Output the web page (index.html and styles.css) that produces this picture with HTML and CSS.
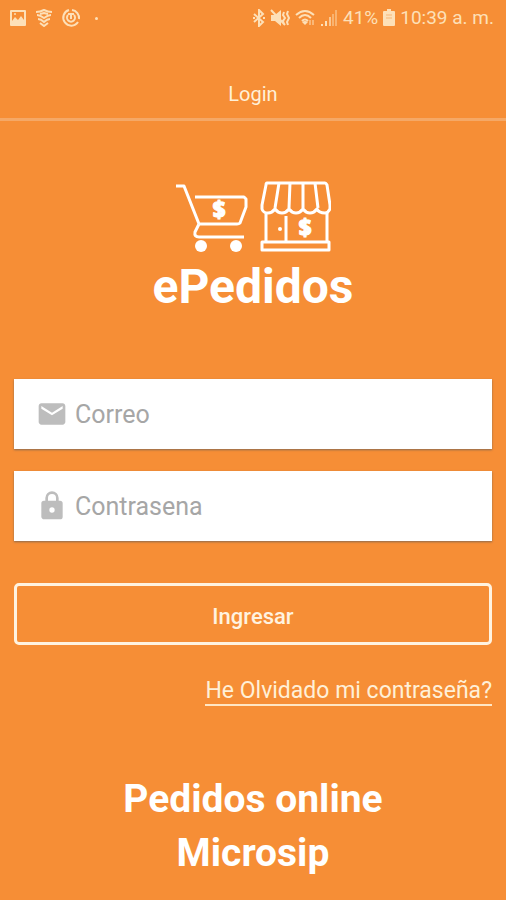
FILE: index.html
```html
<!DOCTYPE html>
<html lang="es">
<head>
<meta charset="utf-8">
<meta name="viewport" content="width=device-width, initial-scale=1">
<title>ePedidos</title>
<link rel="stylesheet" href="styles.css">
</head>
<body>
<div class="status">
  <div class="status-group status-left">
    <svg width="18" height="18" viewBox="0 0 18 18"><path fill="currentColor" fill-rule="evenodd" d="M2 1h14a1 1 0 0 1 1 1v14a1 1 0 0 1-1 1H2a1 1 0 0 1-1-1V2a1 1 0 0 1 1-1zm1 2v9l3-4 3 3 3-4 3 4V3z"/><circle cx="6" cy="5" r="1" fill="currentColor"/></svg>
    <svg width="18" height="18" viewBox="0 0 18 18" fill="none" stroke="currentColor" stroke-width="2"><path d="M1 3q4 0 8-2 4 2 8 2M2 6q3 0 7 3 4-3 7-3M3 10q3 0 6 3 3-3 6-3M5 14l4 3 4-3M5 5l4-1 4 1"/></svg>
    <svg width="20" height="20" viewBox="0 0 20 20" fill="none" stroke="currentColor" stroke-width="2"><path d="M11 2a8 8 0 0 1 7 9M17 14A8 8 0 1 1 8 2"/><path d="M7 7a4 4 0 1 0 6 0M7 6h6M10 5v6"/></svg>
    <span class="dot"></span>
  </div>
  <div class="status-group status-right">
    <svg width="12" height="18" viewBox="0 0 12 18" fill="none" stroke="currentColor" stroke-width="2"><path d="M1 5l9 8-4 4V1l4 4-9 8"/><path d="M0 9h2M10 9h2"/></svg>
    <svg width="20" height="18" viewBox="0 0 20 18"><path fill="currentColor" d="M1 6h4l6-5v16l-6-5H1z"/><path fill="none" stroke="currentColor" stroke-width="2" d="M1 1l14 15M14 3l-1 3 2 3-2 3 1 3M18 2l-1 3 2 4-2 4 1 3"/></svg>
    <svg width="20" height="18" viewBox="0 0 20 18" fill="none" stroke="currentColor" stroke-width="2"><path d="M1 6q9-8 18 0M4 9q6-6 12 0M7 12q3-3 6 0"/><path fill="currentColor" stroke="none" d="M7 13l3 3 3-3q-3-2-6 0z"/><path opacity=".5" d="M15 11v5M18 11v5"/></svg>
    <svg width="18" height="18" viewBox="0 0 18 18" fill="none" stroke="currentColor" stroke-width="2"><path d="M2 15v2M6 12v5"/><path opacity=".7" d="M10 8v9"/><path opacity=".45" d="M16 1v16M13 5v12"/></svg>
    <span>41%</span>
    <svg width="12" height="18" viewBox="0 0 12 18"><path fill="currentColor" d="M4 0h4v2h3a1 1 0 0 1 1 1v13a1 1 0 0 1-1 1H1a1 1 0 0 1-1-1V3a1 1 0 0 1 1-1h3z"/><path fill="none" stroke="#f68e36" opacity=".5" d="M3 6h6M3 9h6"/></svg>
    <span>10:39 a. m.</span>
  </div>
</div>
<header class="bar">Login</header>
<main class="content">
  <div class="brand">
    <svg class="logo" width="156" height="74" viewBox="175 180 156 74" fill="none" stroke="#fff" stroke-width="3" stroke-linejoin="round" aria-hidden="true">
      <path d="M176 186h8l15 38M195 197h49l2 2v8l-6 16q-1 1-3 1h-38M199 224l-4 8q-1 5 4 5h45"/>
      <g fill="#fff" stroke="none"><circle cx="201" cy="246" r="6"/><circle cx="236" cy="246" r="6"/><circle cx="280" cy="229" r="2"/></g>
      <path d="M267 183h58q1 0 2 2l3 20v4q-2 4-5 4-6 0-8-4-3 4-7 4t-7-4q-3 4-7 4t-7-4q-3 4-7 4t-7-4q-3 4-7 4-5 0-6-4v-4l4-20q0-2 1-2z"/>
      <path d="M279 183l-4 25M290 183l-1 25M303 183v25M315 183l3 25"/>
      <path d="M266 213v29M327 213v29M286 216v26"/>
      <path d="M262 242h67v8h-67z"/>
      <g class="coin" fill="#fff" stroke="#fff" stroke-width="1"><text x="219" y="218">$</text><text x="305" y="236">$</text></g>
    </svg>
    <h1 class="name">ePedidos</h1>
  </div>
  <form class="form">
    <label class="field">
      <svg width="32" height="32" viewBox="0 0 24 24" aria-hidden="true"><path fill="currentColor" d="M20 4H4c-1 0-2 1-2 2v12c0 1 1 2 2 2h16c1 0 2-1 2-2V6c0-1-1-2-2-2zm0 4l-8 5-8-5V6l8 5 8-5z"/></svg>
      <input type="email" placeholder="Correo" aria-label="Correo">
    </label>
    <label class="field">
      <svg width="32" height="32" viewBox="0 0 24 24" aria-hidden="true"><path fill="currentColor" d="M18 8h-1V6A5 5 0 0 0 7 6v2H6a2 2 0 0 0-2 2v10c0 1 1 2 2 2h12a2 2 0 0 0 2-2V10a2 2 0 0 0-2-2zm-6 9a2 2 0 1 1 0-4 2 2 0 0 1 0 4zm3-9H9V6a3 3 0 0 1 6 0z"/></svg>
      <input type="password" placeholder="Contrasena" aria-label="Contrasena">
    </label>
    <button class="submit" type="button">Ingresar</button>
    <a class="forgot" href="#">He Olvidado mi contraseña?</a>
  </form>
  <h2 class="tagline">Pedidos online<br>Microsip</h2>
</main>
</body>
</html>
```
FILE: styles.css
```css
* { box-sizing: border-box; }
body {
  margin: 0;
  min-height: 100vh;
  background: #f68e36;
  color: #fff;
  font-family: Roboto, "Liberation Sans", sans-serif;
}
.status {
  display: flex;
  justify-content: space-between;
  align-items: center;
  height: 36px;
  padding: 0 12px 0 9px;
  color: #fde0b8;
  font-size: 19px;
  line-height: 24px;
  white-space: nowrap;
}
.status-group { display: flex; align-items: center; }
.status-left { gap: 8px; }
.status-right { gap: 5px; }
.dot {
  width: 3px;
  height: 3px;
  margin-left: 6px;
  border-radius: 50%;
  background: currentColor;
}
.bar {
  padding: 46px 0 12px;
  border-bottom: 3px solid #f5a866;
  color: #fff0d8;
  font-size: 20px;
  line-height: 24px;
  text-align: center;
}
.content { padding: 59px 14px 20px; }
.brand {
  display: flex;
  flex-direction: column;
  align-items: center;
}
.logo { display: block; }
.coin {
  font-family: "Open Sans", sans-serif;
  font-size: 22px;
  font-weight: 800;
  text-anchor: middle;
}
.name {
  margin: 4px 0 0;
  font-size: 48px;
  line-height: 58px;
  font-weight: 700;
}
.form {
  display: flex;
  flex-direction: column;
  gap: 22px;
  margin-top: 63px;
}
.field {
  display: flex;
  align-items: center;
  gap: 7px;
  height: 70px;
  padding: 0 22px;
  background: #fff;
  box-shadow: 0 1px 2px #8a6a50;
  color: #bdbdbd;
}
.field input {
  flex: 1;
  min-width: 0;
  padding: 2px 0 0;
  border: 0;
  outline: 0;
  background: none;
  color: #555;
  font: 25px/32px Roboto, sans-serif;
}
.field input::placeholder { color: #a6a6a6; opacity: 1; }
.submit {
  height: 62px;
  margin-top: 20px;
  padding: 6px 0 0;
  border: 3px solid #fff3e0;
  border-radius: 5px;
  background: transparent;
  color: #fff3e0;
  font: 500 22px/28px Roboto, sans-serif;
}
.forgot {
  align-self: flex-end;
  margin-top: 8px;
  padding-top: 3px;
  border-bottom: 2px solid #ffe6c4;
  color: #fff0d8;
  font-size: 23px;
  line-height: 26px;
  text-decoration: none;
}
.tagline {
  margin: 66px 0 0;
  font-size: 39px;
  line-height: 54px;
  font-weight: 700;
  text-align: center;
}
```
